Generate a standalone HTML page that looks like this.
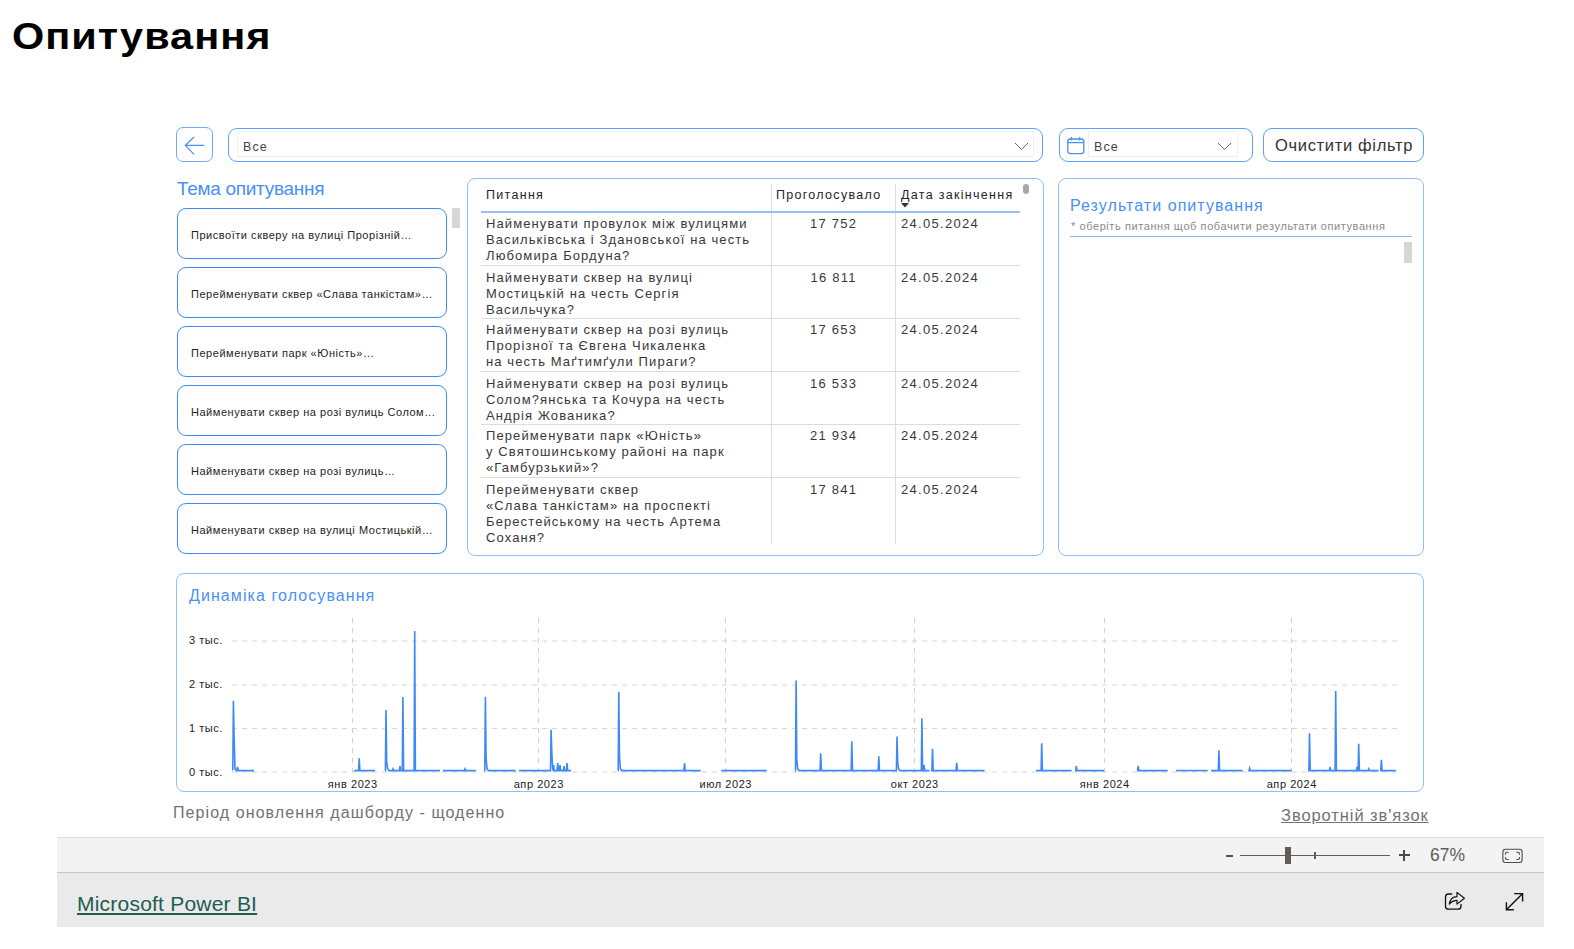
<!DOCTYPE html>
<html lang="uk">
<head>
<meta charset="utf-8">
<title>Опитування</title>
<style>
html,body{margin:0;padding:0;background:#fff;}
body{width:1574px;height:949px;position:relative;overflow:hidden;font-family:"Liberation Sans",sans-serif;}
.a{position:absolute;}
.title{left:12px;top:14.5px;font-size:37px;font-weight:bold;color:#000;line-height:44px;white-space:nowrap;letter-spacing:0.9px;transform:scaleX(1.12);transform-origin:0 0;}
.bb{left:176px;top:127px;width:35px;height:33px;border:1px solid #72a8f8;border-radius:7px;box-sizing:content-box;}
.dd{border:1px solid #62a0f7;border-radius:9px;}
.inner{border:1px solid #f0f0f0;}
.ddtxt{font-size:12.5px;letter-spacing:1.1px;color:#444;white-space:nowrap;}
.panel{border:1px solid #92bef9;border-radius:8px;}
.h1b{color:#4a8ff6;white-space:nowrap;}
.card{left:177px;width:268px;height:49px;border:1px solid #3f89f5;border-radius:9px;}
.ctxt{left:191px;font-size:11px;letter-spacing:0.53px;color:#252423;white-space:nowrap;}
.th{font-size:12.5px;letter-spacing:1.3px;color:#252423;white-space:nowrap;line-height:16px;}
.tb{font-size:13px;letter-spacing:1.1px;color:#383838;white-space:nowrap;line-height:16px;}
.tn{left:771px;width:124px;text-align:center;text-indent:1.2px;letter-spacing:1.25px;}
.td{letter-spacing:1.3px;}
.yl{left:189px;font-size:11px;letter-spacing:0.55px;line-height:12px;color:#222;white-space:nowrap;}
.xl{width:100px;text-align:center;font-size:11px;letter-spacing:0.55px;text-indent:0.55px;line-height:12px;color:#222;white-space:nowrap;}
.foot1{left:57px;top:837px;width:1487px;height:34px;background:#f3f3f3;border-top:1px solid #dedede;}
.foot2{left:57px;top:872px;width:1487px;height:54px;background:#eaeaea;border-top:1px solid #c6c6c6;}
</style>
</head>
<body>
<div class="a title">Опитування</div>

<!-- back button -->
<div class="a bb"></div>
<svg class="a" style="left:176px;top:127px" width="37" height="35" viewBox="0 0 37 35">
<path d="M9.3 18.3 H28.2 M18 10 L9.3 18.3 L18 27.3" fill="none" stroke="#4a8ff6" stroke-width="1.2"/>
</svg>

<!-- main dropdown -->
<div class="a dd" style="left:228px;top:128px;width:813px;height:32px;"></div>
<div class="a inner" style="left:237px;top:131px;width:795px;height:24px;"></div>
<div class="a ddtxt" style="left:243px;top:140px;">Все</div>
<svg class="a" style="left:1013px;top:141px" width="18" height="11"><path d="M2 2 L8.5 8.5 L15 2" fill="none" stroke="#666" stroke-width="1"/></svg>

<!-- date dropdown -->
<div class="a dd" style="left:1059px;top:128px;width:192px;height:32px;"></div>
<div class="a inner" style="left:1088px;top:131px;width:148px;height:24px;"></div>
<svg class="a" style="left:1065px;top:135px" width="22" height="22"><rect x="2.8" y="4" width="16" height="14.6" rx="2.5" fill="none" stroke="#4a8ff6" stroke-width="1.3"/><path d="M2.8 7.6 H18.8 M6.5 2 V5.6 M14.6 2 V5.6" stroke="#4a8ff6" stroke-width="1.3"/></svg>
<div class="a ddtxt" style="left:1094px;top:140px;">Все</div>
<svg class="a" style="left:1216px;top:141px" width="18" height="11"><path d="M2 2 L8.5 8.5 L15 2" fill="none" stroke="#666" stroke-width="1"/></svg>

<!-- clear filter button -->
<div class="a dd" style="left:1263px;top:128px;width:159px;height:32px;"></div>
<div class="a" style="left:1275px;top:136px;font-size:16.5px;letter-spacing:0.67px;color:#333;white-space:nowrap;">Очистити фільтр</div>

<!-- left slicer -->
<div class="a h1b" style="left:177px;top:177.5px;font-size:19px;letter-spacing:-0.3px;">Тема опитування</div>
<div class="a card" style="top:208px"></div>
<div class="a card" style="top:267px"></div>
<div class="a card" style="top:326px"></div>
<div class="a card" style="top:385px"></div>
<div class="a card" style="top:444px"></div>
<div class="a card" style="top:503px"></div>
<div class="a ctxt" style="top:229px">Присвоїти скверу на вулиці Прорізній…</div>
<div class="a ctxt" style="top:288px">Перейменувати сквер «Слава танкістам»…</div>
<div class="a ctxt" style="top:347px">Перейменувати парк «Юність»…</div>
<div class="a ctxt" style="top:406px">Найменувати сквер на розі вулиць Солом…</div>
<div class="a ctxt" style="top:465px">Найменувати сквер на розі вулиць…</div>
<div class="a ctxt" style="top:524px">Найменувати сквер на вулиці Мостицькій…</div>
<div class="a" style="left:452px;top:208px;width:8px;height:20px;background:#d6d6d6;"></div>

<!-- table panel -->
<div class="a panel" style="left:467px;top:178px;width:575px;height:376px;"></div>

<div class="a th" style="left:486px;top:187px">Питання</div>
<div class="a th" style="left:776px;top:187px">Проголосувало</div>
<div class="a th" style="left:901px;top:187px">Дата закінчення</div>
<svg class="a" style="left:900px;top:202px" width="10" height="7"><path d="M1 1 H9 L5 5.5 Z" fill="#333"/></svg>
<div class="a" style="left:771px;top:184px;width:1px;height:360px;background:#dedede"></div>
<div class="a" style="left:895px;top:184px;width:1px;height:360px;background:#dedede"></div>
<div class="a" style="left:481px;top:211px;width:539px;height:2px;background:#97bff8"></div>
<div class="a" style="left:1023px;top:184px;width:6px;height:10px;border-radius:3px;background:#a8a8a8"></div>
<div class="a tb" style="left:486px;top:215.5px">Найменувати провулок між вулицями<br>Васильківська і Здановської на честь<br>Любомира Бордуна?</div>
<div class="a tb tn" style="top:215.5px">17 752</div>
<div class="a tb td" style="left:901px;top:215.5px">24.05.2024</div>
<div class="a tb" style="left:486px;top:269.5px">Найменувати сквер на вулиці<br>Мостицькій на честь Сергія<br>Васильчука?</div>
<div class="a tb tn" style="top:269.5px">16 811</div>
<div class="a tb td" style="left:901px;top:269.5px">24.05.2024</div>
<div class="a tb" style="left:486px;top:321.5px">Найменувати сквер на розі вулиць<br>Прорізної та Євгена Чикаленка<br>на честь Маґтимґули Пираги?</div>
<div class="a tb tn" style="top:321.5px">17 653</div>
<div class="a tb td" style="left:901px;top:321.5px">24.05.2024</div>
<div class="a tb" style="left:486px;top:375.5px">Найменувати сквер на розі вулиць<br>Солом?янська та Кочура на честь<br>Андрія Жованика?</div>
<div class="a tb tn" style="top:375.5px">16 533</div>
<div class="a tb td" style="left:901px;top:375.5px">24.05.2024</div>
<div class="a tb" style="left:486px;top:427.5px">Перейменувати парк «Юність»<br>у Святошинському районі на парк<br>«Гамбурзький»?</div>
<div class="a tb tn" style="top:427.5px">21 934</div>
<div class="a tb td" style="left:901px;top:427.5px">24.05.2024</div>
<div class="a tb" style="left:486px;top:481.5px">Перейменувати сквер<br>«Слава танкістам» на проспекті<br>Берестейському на честь Артема<br>Соханя?</div>
<div class="a tb tn" style="top:481.5px">17 841</div>
<div class="a tb td" style="left:901px;top:481.5px">24.05.2024</div>
<div class="a" style="left:481px;top:265px;width:539px;height:1px;background:#dcdcdc"></div>
<div class="a" style="left:481px;top:318px;width:539px;height:1px;background:#dcdcdc"></div>
<div class="a" style="left:481px;top:371px;width:539px;height:1px;background:#dcdcdc"></div>
<div class="a" style="left:481px;top:424px;width:539px;height:1px;background:#dcdcdc"></div>
<div class="a" style="left:481px;top:477px;width:539px;height:1px;background:#dcdcdc"></div>

<!-- results panel -->
<div class="a panel" style="left:1058px;top:178px;width:364px;height:376px;"></div>
<div class="a h1b" style="left:1070px;top:197px;font-size:16px;letter-spacing:1.05px;">Результати опитування</div>
<div class="a" style="left:1071px;top:219.5px;font-size:11px;letter-spacing:0.58px;color:#8a8a8a;white-space:nowrap;">* оберіть питання щоб побачити результати опитування</div>
<div class="a" style="left:1070px;top:236px;width:342px;height:1px;background:#8ab8f8"></div>
<div class="a" style="left:1404px;top:242px;width:8px;height:21px;background:#d6d6d6"></div>

<!-- chart panel -->
<div class="a panel" style="left:176px;top:573px;width:1246px;height:217px;"></div>
<div class="a h1b" style="left:189px;top:587px;font-size:16px;letter-spacing:1.08px;">Динаміка голосування</div>

<svg class="a" style="left:0;top:0" width="1574" height="949" viewBox="0 0 1574 949">
<line x1="232" y1="641" x2="1397" y2="641" stroke="#d6d6d6" stroke-width="1" stroke-dasharray="5 5"/>
<line x1="232" y1="685" x2="1397" y2="685" stroke="#d6d6d6" stroke-width="1" stroke-dasharray="5 5"/>
<line x1="232" y1="728.5" x2="1397" y2="728.5" stroke="#d6d6d6" stroke-width="1" stroke-dasharray="5 5"/>
<line x1="232" y1="772" x2="1397" y2="772" stroke="#d6d6d6" stroke-width="1" stroke-dasharray="5 5"/>
<line x1="352.5" y1="618" x2="352.5" y2="772" stroke="#cfcfcf" stroke-width="1" stroke-dasharray="5 5"/>
<line x1="538.5" y1="618" x2="538.5" y2="772" stroke="#cfcfcf" stroke-width="1" stroke-dasharray="5 5"/>
<line x1="725.5" y1="618" x2="725.5" y2="772" stroke="#cfcfcf" stroke-width="1" stroke-dasharray="5 5"/>
<line x1="914.5" y1="618" x2="914.5" y2="772" stroke="#cfcfcf" stroke-width="1" stroke-dasharray="5 5"/>
<line x1="1104.5" y1="618" x2="1104.5" y2="772" stroke="#cfcfcf" stroke-width="1" stroke-dasharray="5 5"/>
<line x1="1291.5" y1="618" x2="1291.5" y2="772" stroke="#cfcfcf" stroke-width="1" stroke-dasharray="5 5"/>
<g fill="none" stroke="#3d8af5" stroke-width="1.6" stroke-linejoin="miter">
<path d="M232.8 770.6 L232.8 770.6 L233.4 700.7 L234.1 735.0 L235.0 768.6 L236.4 770.6 L236.9 770.6 L237.5 767.0 L238.2 770.6 L254.0 770.6"/>
<path d="M354.2 770.6 L358.6 770.6 L359.2 758.2 L359.9 770.6 L375.0 770.6"/>
<path d="M385.0 770.6 L385.4 770.6 L386.0 710.1 L386.7 762.0 L387.6 768.6 L389.0 770.6 L392.4 770.6 L393.0 769.0 L393.7 770.6 L399.4 770.6 L400.0 766.0 L400.7 770.6 L402.3 770.6 L402.9 697.0 L403.6 770.6 L414.1 770.6 L414.7 631.0 L415.4 770.6 L440.0 770.6"/>
<path d="M443.0 770.6 L464.4 770.6 L465.0 769.0 L465.7 770.6 L475.8 770.6"/>
<path d="M484.2 770.6 L484.8 770.6 L485.4 696.7 L486.1 758.0 L487.0 768.6 L488.4 770.6 L515.6 770.6"/>
<path d="M519.0 770.6 L550.5 770.6 L551.1 729.8 L551.8 752.0 L552.7 768.6 L553.1 770.6 L553.7 765.0 L554.1 770.6 L554.4 770.6 L557.1 770.6 L557.7 763.0 L558.4 770.6 L559.4 770.6 L560.0 765.0 L560.7 770.6 L563.4 770.6 L564.0 766.0 L564.7 770.6 L566.4 770.6 L567.0 763.0 L567.7 770.6 L571.1 770.6"/>
<path d="M618.0 770.6 L618.2 770.6 L618.8 692.1 L619.5 757.0 L620.4 768.6 L621.8 770.6 L683.9 770.6 L684.5 763.2 L685.2 770.6 L700.7 770.6"/>
<path d="M721.2 770.6 L766.6 770.6"/>
<path d="M795.1 770.6 L795.5 770.6 L796.1 680.5 L796.8 760.0 L797.7 768.6 L799.1 770.6 L820.1 770.6 L820.7 753.2 L821.4 770.6 L851.2 770.6 L851.8 741.2 L852.5 770.6 L878.2 770.6 L878.8 756.2 L879.5 770.6 L896.4 770.6 L897.0 736.6 L897.7 763.0 L898.6 768.6 L900.0 770.6 L921.3 770.6 L921.9 718.2 L922.6 770.6 L923.4 770.6 L924.0 765.0 L924.7 770.6 L929.7 770.6"/>
<path d="M931.0 770.6 L931.9 770.6 L932.5 748.8 L933.2 770.6 L956.1 770.6 L956.7 762.8 L957.4 770.6 L984.6 770.6"/>
<path d="M1036.0 770.6 L1041.1 770.6 L1041.7 743.2 L1042.4 770.6 L1071.7 770.6"/>
<path d="M1075.1 770.6 L1075.7 770.6 L1076.3 766.2 L1077.0 770.6 L1104.1 770.6"/>
<path d="M1137.2 770.6 L1137.6 770.6 L1138.2 765.8 L1138.9 770.6 L1167.7 770.6"/>
<path d="M1176.0 770.6 L1207.7 770.6"/>
<path d="M1211.1 770.6 L1218.3 770.6 L1218.9 750.2 L1219.6 770.6 L1242.6 770.6"/>
<path d="M1248.2 770.6 L1249.0 770.6 L1249.6 768.2 L1250.3 770.6 L1291.6 770.6"/>
<path d="M1308.0 770.6 L1308.9 770.6 L1309.5 733.2 L1310.2 770.6 L1329.4 770.6 L1330.0 767.0 L1330.7 770.6 L1335.1 770.6 L1335.7 691.1 L1336.4 770.6 L1356.4 770.6 L1357.0 767.0 L1357.7 770.6 L1358.1 770.6 L1358.7 743.8 L1359.4 770.6 L1368.2 770.6 L1368.8 769.0 L1369.5 770.6 L1378.6 770.6"/>
<path d="M1380.0 770.6 L1380.8 770.6 L1381.4 759.8 L1382.1 770.6 L1395.8 770.6"/>
</g>
</svg>
<div class="a yl" style="top:634px">3 тыс.</div>
<div class="a yl" style="top:678px">2 тыс.</div>
<div class="a yl" style="top:722px">1 тыс.</div>
<div class="a yl" style="top:766px">0 тыс.</div>
<div class="a xl" style="left:302.5px;top:777.5px">янв 2023</div>
<div class="a xl" style="left:488.5px;top:777.5px">апр 2023</div>
<div class="a xl" style="left:675.5px;top:777.5px">июл 2023</div>
<div class="a xl" style="left:864.5px;top:777.5px">окт 2023</div>
<div class="a xl" style="left:1054.5px;top:777.5px">янв 2024</div>
<div class="a xl" style="left:1241.5px;top:777.5px">апр 2024</div>

<!-- footer texts -->
<div class="a" style="left:173px;top:804px;font-size:16px;letter-spacing:1.08px;color:#727272;white-space:nowrap;">Період оновлення дашборду - щоденно</div>
<div class="a" style="left:1281px;top:805.5px;font-size:16.5px;letter-spacing:0.92px;color:#727272;text-decoration:underline;white-space:nowrap;">Зворотній зв'язок</div>

<div class="a foot1"></div>
<div class="a" style="left:1226px;top:855px;width:7px;height:2px;background:#4f4f4f"></div>
<div class="a" style="left:1240px;top:855px;width:150px;height:1px;background:#605e5c"></div>
<div class="a" style="left:1285px;top:847px;width:6px;height:17px;background:#5f5e5c"></div>
<div class="a" style="left:1314px;top:852px;width:2px;height:7px;background:#5f5e5c"></div>
<div class="a" style="left:1398.5px;top:854px;width:11px;height:2px;background:#4a4a4a"></div>
<div class="a" style="left:1403px;top:849.5px;width:2px;height:11px;background:#4a4a4a"></div>
<div class="a" style="left:1430px;top:845px;font-size:17.5px;color:#605e5c;white-space:nowrap;line-height:20px;">67%</div>
<svg class="a" style="left:1495px;top:843px" width="35" height="25" viewBox="1495 843 35 25">
<rect x="1502.9" y="849.3" width="19.2" height="13.2" rx="2.5" fill="none" stroke="#4d4b49" stroke-width="1.1"/>
<path d="M1508.7 852.2 H1507 Q1505.5 852.2 1505.5 853.7 V854.8 M1505.5 857 V858 Q1505.5 859.5 1507 859.5 H1508.7 M1516.3 852.2 H1518 Q1519.5 852.2 1519.5 853.7 V854.8 M1519.5 857 V858 Q1519.5 859.5 1518 859.5 H1516.3" fill="none" stroke="#4d4b49" stroke-width="1.1"/>
</svg>
<div class="a foot2"></div>
<svg class="a" style="left:1435px;top:880px" width="100" height="45" viewBox="1435 880 100 45">
<path d="M1452.2 894 H1448.5 Q1445.5 894 1445.5 897 V906.2 Q1445.5 909.2 1448.5 909.2 H1458 Q1461 909.2 1461 906.2 V904" fill="none" stroke="#111" stroke-width="1.3"/>
<path d="M1449.3 904.1 Q1450.5 896.8 1457 896.6 V892.4 L1464.4 898.2 L1457 904.1 V900.3 Q1452.5 900.5 1449.3 904.1 Z" fill="none" stroke="#111" stroke-width="1.2" stroke-linejoin="round"/>
<path d="M1506.6 909.5 L1522.4 893.7 M1514.1 893.6 H1522.6 V901.6 M1506.4 902.2 V909.7 H1513.8" fill="none" stroke="#111" stroke-width="1.4"/>
</svg>
<div class="a" style="left:77px;top:892px;font-size:21px;letter-spacing:0.22px;color:#215c53;text-decoration:underline;white-space:nowrap;">Microsoft Power BI</div>
</body>
</html>
